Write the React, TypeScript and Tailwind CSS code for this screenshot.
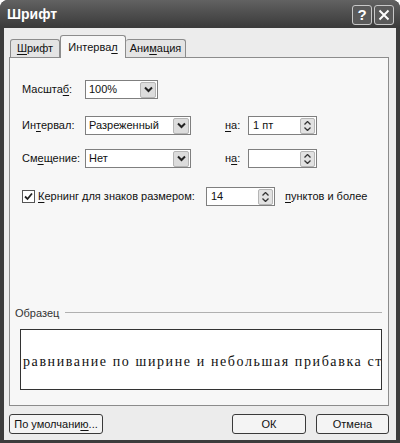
import type { ReactNode } from "react"

const ui = { fontFamily: '"Liberation Sans", Arial, sans-serif' }

function U({ children }: { children: ReactNode }) {
  return <span className="underline underline-offset-2">{children}</span>
}

function Chevron() {
  return (
    <svg width="9" height="7" viewBox="0 0 9 7">
      <path d="M1 1.5 L4.5 5 L8 1.5" fill="none" stroke="#222" strokeWidth="2" />
    </svg>
  )
}

function Select({ value, width }: { value: string; width: string }) {
  return (
    <div className={`${width} h-[19px] flex items-center justify-between border border-[#7f7f7f] bg-white pl-[3px] pr-[1px]`}>
      <span>{value}</span>
      <div className="w-[16px] h-[16px] flex items-center justify-center rounded-[2px] border border-[#b5b5b5] bg-[#dcdcdc]">
        <Chevron />
      </div>
    </div>
  )
}

function Spinner({ value, width }: { value: string; width: string }) {
  return (
    <div className={`${width} h-[19px] flex items-center justify-between border border-[#7f7f7f] bg-white pl-[4px] pr-[1px]`}>
      <span>{value}</span>
      <div className="w-[15px] h-[16px] flex flex-col items-center justify-center gap-[2px] rounded-[2px] border border-[#b5b5b5] bg-[#e2e2e2]">
        <svg width="7" height="4" viewBox="0 0 7 4">
          <path d="M0.5 3.5 L3.5 0.5 L6.5 3.5" fill="none" stroke="#333" strokeWidth="1.3" />
        </svg>
        <svg width="7" height="4" viewBox="0 0 7 4">
          <path d="M0.5 0.5 L3.5 3.5 L6.5 0.5" fill="none" stroke="#333" strokeWidth="1.3" />
        </svg>
      </div>
    </div>
  )
}

function Button({ children, width }: { children: ReactNode; width: string }) {
  return (
    <div className={`${width} h-[20px] flex items-center justify-center rounded-[3px] border border-[#3a3a3a] bg-[#f4f4f4] text-[11px] text-[#111]`}>
      {children}
    </div>
  )
}

export default function App() {
  return (
    <div style={ui} className="w-[400px] h-[443px] flex flex-col bg-[#3c3c3c] rounded-t-[8px] overflow-hidden text-[11px] text-[#111] whitespace-nowrap">
      <div className="h-[28px] flex items-center justify-between pl-[7px] pr-[6px] bg-gradient-to-b from-[#626262] to-[#3a3a3a]">
        <span className="text-white font-bold text-[14px]">Шрифт</span>
        <div className="flex items-center gap-[2px] pt-[2px]">
          <div className="w-[20px] h-[20px] flex items-center justify-center rounded-[3px] border border-[#c8c8c8] bg-[#5a5a5a] text-white font-bold text-[15px]">
            ?
          </div>
          <div className="w-[20px] h-[20px] flex items-center justify-center rounded-[3px] border border-[#c8c8c8] bg-[#5a5a5a]">
            <svg width="12" height="12" viewBox="0 0 12 12">
              <path d="M1.5 1.5 L10.5 10.5 M10.5 1.5 L1.5 10.5" stroke="#fff" strokeWidth="2" />
            </svg>
          </div>
        </div>
      </div>

      <div className="flex-1 ml-[4px] mr-[4px] mb-[3px] bg-[#ececec] flex flex-col pl-[5px] pr-[7px] pt-[6px]">
        <div className="flex items-end h-[23px] pl-[1px]">
          <div className="w-[50px] h-[18px] flex items-center justify-center border border-b-0 border-[#8c8c8c] rounded-t-[3px] bg-[#e4e4e4]">
            <U>Ш</U>рифт
          </div>
          <div className="w-[66px] h-[23px] flex items-center justify-center border border-b-0 border-[#8c8c8c] rounded-t-[3px] bg-[#f7f7f7] -mb-[1px] relative">
            Интерва<U>л</U>
          </div>
          <div className="w-[60px] h-[18px] flex items-center justify-center border border-b-0 border-l-0 border-[#8c8c8c] rounded-t-[3px] bg-[#e4e4e4]">
            Ани<U>м</U>ация
          </div>
        </div>

        <div className="h-[349px] border border-[#8c8c8c] bg-[#f7f7f7] flex flex-col px-[12px] pt-[22px]">
          <div className="flex items-center">
            <span className="w-[63px]">
              Масшта<U>б</U>:
            </span>
            <Select value="100%" width="w-[73px]" />
          </div>

          <div className="flex items-center mt-[17px]">
            <span className="w-[63px]">
              Ин<U>т</U>ервал:
            </span>
            <Select value="Разреженный" width="w-[106px]" />
            <span className="ml-[34px] w-[23px]">
              <U>н</U>а:
            </span>
            <Spinner value="1 пт" width="w-[69px]" />
          </div>

          <div className="flex items-center mt-[14px]">
            <span className="w-[63px]">
              См<U>е</U>щение:
            </span>
            <Select value="Нет" width="w-[106px]" />
            <span className="ml-[34px] w-[23px]">
              н<U>а</U>:
            </span>
            <Spinner value="" width="w-[69px]" />
          </div>

          <div className="flex items-center mt-[19px]">
            <div className="w-[13px] h-[13px] border border-[#555] bg-white flex items-center justify-center">
              <svg width="9" height="9" viewBox="0 0 9 9">
                <path d="M1 4.5 L3.5 7 L8 1.5" fill="none" stroke="#222" strokeWidth="1.8" />
              </svg>
            </div>
            <span className="ml-[3px] w-[168px]">
              <U>К</U>ернинг для знаков размером:
            </span>
            <Spinner value="14" width="w-[69px]" />
            <span className="ml-[10px]">
              <U>п</U>унктов и более
            </span>
          </div>

          <div className="mt-auto mb-[15px] flex flex-col">
            <div className="flex items-center ml-[-7px] mr-[-6px]">
              <span className="text-[11px] text-[#333]">Образец</span>
              <div className="flex-1 h-px bg-[#b0b0b0] ml-[6px]" />
            </div>
            <div className="mt-[8px] h-[61px] mr-[-6px] ml-[-2px] border border-[#333] bg-white flex items-center overflow-hidden pl-[2px] pt-[3px]">
              <span
                className="whitespace-nowrap text-[14px] tracking-[1.6px] text-[#111]"
                style={{ fontFamily: '"Liberation Serif", "Times New Roman", serif' }}
              >
                равнивание по ширине и небольшая прибавка ст
              </span>
            </div>
          </div>
        </div>

        <div className="flex items-center mt-[8px]">
          <Button width="w-[94px]">
            По умолчани<U>ю</U>...
          </Button>
          <div className="flex-1" />
          <Button width="w-[74px]">ОК</Button>
          <div className="w-[10px]" />
          <Button width="w-[73px]">Отмена</Button>
        </div>
      </div>
    </div>
  )
}
